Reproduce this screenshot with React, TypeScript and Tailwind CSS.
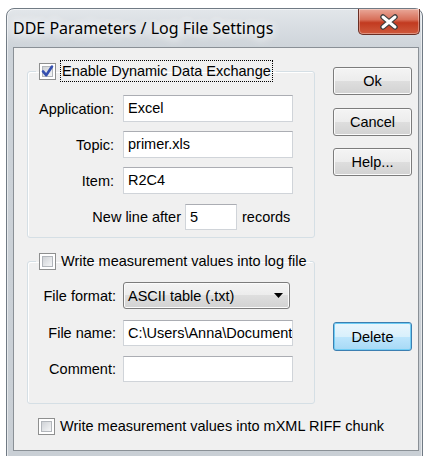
import React from "react";

const ui = "font-['Liberation_Sans',Arial,sans-serif] text-[14.5px] leading-[20px] text-black";

function CheckBox({ checked }: { checked?: boolean }) {
  return (
    <span className="relative inline-flex h-[17px] w-[17px] shrink-0 items-center justify-center border border-[#8e8f8f] bg-white">
      <span className="h-[11px] w-[11px] border border-[#b2b6bb] bg-[linear-gradient(135deg,#cfd2d6,#f5f6f7)]" />
      {checked && (
        <svg className="absolute left-[0px] top-[0px]" width="15" height="15" viewBox="0 0 15 15">
          <path d="M3 7.4 L6.2 11.2 L12 2.6" fill="none" stroke="#3550b0" strokeWidth="2.6" strokeLinecap="round" strokeLinejoin="round" />
        </svg>
      )}
    </span>
  );
}

function Field({ value, className }: { value?: string; className: string }) {
  return (
    <div className={"overflow-hidden whitespace-nowrap border border-[#d0d4d9] border-t-[#abadb3] bg-white pl-[4px] " + className}>
      {value}
    </div>
  );
}

function Button({ label, className }: { label: string; className: string }) {
  return (
    <div
      className={
        "flex w-[79px] items-center justify-center rounded-[3px] border border-[#7c7c7c] bg-[linear-gradient(#f4f4f4_0%,#ececec_50%,#dedede_50%,#d2d2d2_100%)] shadow-[inset_0_0_0_1px_#fbfbfb] " +
        className
      }
    >
      {label}
    </div>
  );
}

function CloseButton() {
  return (
    <div className="mr-[2px] flex h-[26px] w-[62px] items-center justify-center rounded-b-[5px] border border-t-0 border-[#6a2e24] bg-[linear-gradient(#e9a899_0%,#d8705a_42%,#c23a20_55%,#cf5a3d_100%)] shadow-[inset_0_0_0_1px_rgba(255,255,255,0.35)]">
      <svg width="20" height="16" viewBox="0 0 20 16">
        <path d="M4 3 L16 13 M16 3 L4 13" stroke="#3e3e3e" strokeWidth="5.5" strokeLinecap="round" />
        <path d="M4 3 L16 13 M16 3 L4 13" stroke="#ffffff" strokeWidth="3" strokeLinecap="round" />
      </svg>
    </div>
  );
}

export default function App() {
  return (
    <div className="h-[456px] w-[426px] overflow-hidden bg-white pl-[6px] pt-[8px]">
      <div className="flex h-[452px] w-[417px] flex-col rounded-t-[8px] border border-[#707a84] bg-[linear-gradient(#e2e6ea,#cdd3d9_40px,#c9cfd5)] shadow-[inset_0_0_0_1px_rgba(255,255,255,0.55)]">
        {/* title bar */}
        <div className="flex h-[38px] shrink-0 items-start justify-between">
          <span className="pl-[6px] pt-[9px] font-['Segoe_UI','Noto_Sans',sans-serif] text-[16px] leading-[20px] text-black [text-shadow:0_0_8px_#fff,0_0_12px_#fff,0_0_16px_#fff]">
            DDE Parameters / Log File Settings
          </span>
          <CloseButton />
        </div>

        {/* client area */}
        <div className={"ml-[6px] flex h-[404px] w-[406px] border border-[#8a9096] bg-[#f0f0f0] pl-[13px] pt-[12px] " + ui}>
          <div className="flex w-[288px] flex-col">
            <fieldset className="w-[288px] rounded-[3px] border border-[#d5dfe5] shadow-[inset_1px_1px_0_#fff]">
              <legend className="ml-[8px] px-[3px]">
                <span className="flex items-center gap-[4px]">
                  <CheckBox checked />
                  <span className="border border-dotted border-black px-[1px]">Enable Dynamic Data Exchange</span>
                </span>
              </legend>
              <div className="flex flex-col gap-[9px] pb-[7px] pl-[1px] pt-[13px]">
                <div className="flex items-center">
                  <span className="w-[85px] text-right">Application:</span>
                  <Field className="ml-[9px] h-[27px] w-[170px] leading-[25px]" value="Excel" />
                </div>
                <div className="flex items-center">
                  <span className="w-[85px] text-right">Topic:</span>
                  <Field className="ml-[9px] h-[27px] w-[170px] leading-[25px]" value="primer.xls" />
                </div>
                <div className="flex items-center">
                  <span className="w-[85px] text-right">Item:</span>
                  <Field className="ml-[9px] h-[27px] w-[170px] leading-[25px]" value="R2C4" />
                </div>
                <div className="mt-[1px] flex items-center">
                  <span className="w-[152px] text-right">New line after</span>
                  <Field className="ml-[4px] h-[26px] w-[52px] leading-[24px]" value="5" />
                  <span className="ml-[5px]">records</span>
                </div>
              </div>
            </fieldset>

            <fieldset className="mt-[13px] w-[288px] rounded-[3px] border border-[#d5dfe5] shadow-[inset_1px_1px_0_#fff]">
              <legend className="ml-[8px] px-[3px]">
                <span className="flex items-center gap-[5px]">
                  <CheckBox />
                  <span>Write measurement values into log file</span>
                </span>
              </legend>
              <div className="flex flex-col pb-[21px] pl-[1px] pt-[11px]">
                <div className="flex items-center">
                  <span className="w-[87px] text-right">File format:</span>
                  <div className="ml-[7px] flex h-[27px] w-[167px] items-center justify-between rounded-[3px] border border-[#7c7c7c] bg-[linear-gradient(#f4f4f4_0%,#ececec_50%,#dedede_50%,#d2d2d2_100%)] pl-[4px] pr-[6px] shadow-[inset_0_0_0_1px_#fbfbfb]">
                    <span>ASCII table (.txt)</span>
                    <svg width="9" height="5" viewBox="0 0 9 5">
                      <path d="M0 0 H9 L4.5 5 Z" fill="#000" />
                    </svg>
                  </div>
                </div>
                <div className="mt-[11px] flex items-center">
                  <span className="w-[87px] text-right">File name:</span>
                  <Field className="ml-[7px] h-[26px] w-[170px] leading-[24px]" value="C:\Users\Anna\Documents" />
                </div>
                <div className="mt-[10px] flex items-center">
                  <span className="w-[87px] text-right">Comment:</span>
                  <Field className="ml-[7px] h-[26px] w-[170px] leading-[24px]" value="" />
                </div>
              </div>
            </fieldset>

            <div className="ml-[11px] mt-[12px] flex w-max items-center gap-[5px] whitespace-nowrap">
              <CheckBox />
              <span>Write measurement values into mXML RIFF chunk</span>
            </div>
          </div>

          <div className="ml-[18px] flex flex-col pt-[7px]">
            <Button label="Ok" className="h-[28px]" />
            <Button label="Cancel" className="mt-[13px] h-[28px]" />
            <Button label="Help..." className="mt-[12px] h-[28px]" />
            <div className="mt-[146px] flex h-[29px] w-[79px] items-center justify-center rounded-[3px] border border-[#3c7fb1] bg-[linear-gradient(#eaf6fd_0%,#d9f0fc_50%,#bee6fd_50%,#a7d9f5_100%)] shadow-[inset_0_0_0_1px_#6fcdf5]">
              Delete
            </div>
          </div>
        </div>
      </div>
    </div>
  );
}
